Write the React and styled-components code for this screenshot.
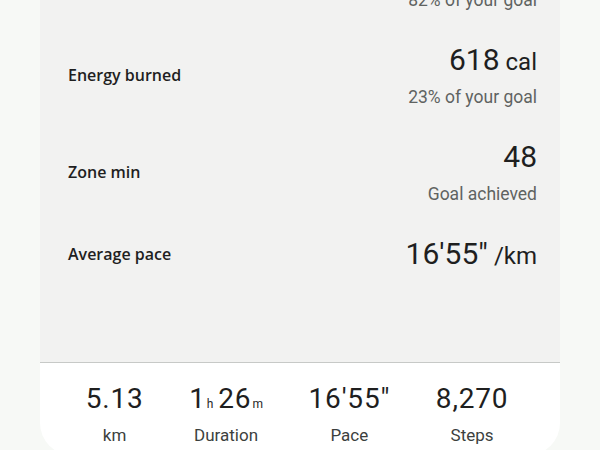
import React from "react";
import styled, { createGlobalStyle } from "styled-components";

const GlobalStyle = createGlobalStyle`
  body {
    margin: 0;
    background-color: #f7f9f6;
    font-family: Roboto, "Liberation Sans", sans-serif;
    overflow: hidden;
  }
`;

const Page = styled.div`
  padding: 0 40px;
`;

const Card = styled.div`
  margin-top: -71px;
  background-color: #f2f2f1;
  padding: 0 23px 74px 28px;
  border-bottom: 1.5px solid #c7c9c7;
`;

const Row = styled.div`
  display: flex;
  justify-content: space-between;
  align-items: center;
  padding: 16px 0;
`;

const Label = styled.div`
  font-family: "Open Sans", Roboto, sans-serif;
  font-size: 16px;
  font-weight: 600;
  color: #1f1f1f;
`;

const ValueBlock = styled.div`
  display: flex;
  flex-direction: column;
  align-items: flex-end;
`;

const Value = styled.div`
  font-size: 30px;
  line-height: 36px;
  color: #1f1f1f;
`;

const Unit = styled.span`
  font-size: ${(p) => p.size || 24}px;
  line-height: 1;
  letter-spacing: 0;
  margin-left: ${(p) => p.gap || 0}px;
  margin-right: ${(p) => p.after || 0}px;
`;

const Sub = styled.div`
  margin-top: 9px;
  font-size: 17.5px;
  line-height: 20px;
  color: #5f6361;
`;

const Summary = styled.div`
  display: flex;
  justify-content: space-evenly;
  background-color: #ffffff;
  border-radius: 0 0 32px 32px;
  padding: 19px 6px 10px 0;
`;

const Stat = styled.div`
  display: flex;
  flex-direction: column;
  align-items: center;
`;

const StatValue = styled.div`
  font-size: 28px;
  line-height: 34px;
  letter-spacing: 0.8px;
  color: #1f1f1f;
`;

const StatLabel = styled.div`
  margin-top: 9px;
  font-size: 17px;
  line-height: 20px;
  color: #3c3f3e;
`;

const rows = [
  { label: "Distance", value: "5.13", unit: "km", sub: "82% of your goal" },
  { label: "Energy burned", value: "618", unit: "cal", sub: "23% of your goal" },
  { label: "Zone min", value: "48", sub: "Goal achieved" },
  { label: "Average pace", value: "16'55\"", unit: "/km" },
];

export default function App() {
  return (
    <Page>
      <GlobalStyle />
      <Card>
        {rows.map((r) => (
          <Row key={r.label}>
            <Label>{r.label}</Label>
            <ValueBlock>
              <Value>
                {r.value}
                {r.unit && <Unit gap={6}>{r.unit}</Unit>}
              </Value>
              {r.sub && <Sub>{r.sub}</Sub>}
            </ValueBlock>
          </Row>
        ))}
      </Card>
      <Summary>
        <Stat>
          <StatValue>5.13</StatValue>
          <StatLabel>km</StatLabel>
        </Stat>
        <Stat>
          <StatValue>
            1<Unit size={12} gap={1} after={5}>h</Unit>26<Unit size={12} gap={1}>m</Unit>
          </StatValue>
          <StatLabel>Duration</StatLabel>
        </Stat>
        <Stat>
          <StatValue>16'55"</StatValue>
          <StatLabel>Pace</StatLabel>
        </Stat>
        <Stat>
          <StatValue>8,270</StatValue>
          <StatLabel>Steps</StatLabel>
        </Stat>
      </Summary>
    </Page>
  );
}
